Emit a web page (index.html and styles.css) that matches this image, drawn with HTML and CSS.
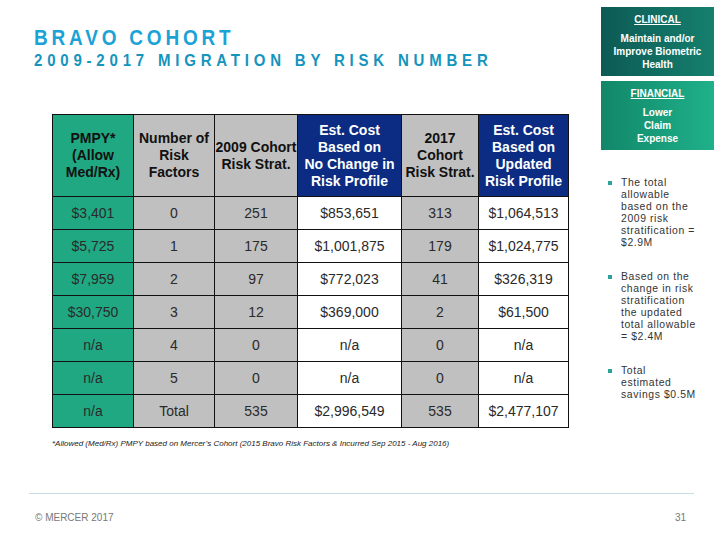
FILE: index.html
```html
<!DOCTYPE html>
<html lang="en">
<head>
<meta charset="utf-8">
<title>Bravo Cohort</title>
<link rel="stylesheet" href="styles.css">
</head>
<body>
<div class="page">
  <div class="main">
    <h1 class="title">BRAVO COHORT</h1>
    <h2 class="subtitle">2009-2017 MIGRATION BY RISK NUMBER</h2>
    <table class="grid">
      <colgroup>
        <col class="c1"><col class="c2"><col class="c3"><col class="c4"><col class="c5"><col class="c6">
      </colgroup>
      <thead>
        <tr>
          <th class="green">PMPY*<br>(Allow<br>Med/Rx)</th>
          <th class="grey">Number of<br>Risk<br>Factors</th>
          <th class="grey nowrap">2009 Cohort<br>Risk Strat.</th>
          <th class="navy">Est. Cost<br>Based on<br>No Change in<br>Risk Profile</th>
          <th class="grey">2017<br>Cohort<br>Risk Strat.</th>
          <th class="navy">Est. Cost<br>Based on<br>Updated<br>Risk Profile</th>
        </tr>
      </thead>
      <tbody>
        <tr><td class="green">$3,401</td><td class="grey">0</td><td class="grey">251</td><td>$853,651</td><td class="grey">313</td><td>$1,064,513</td></tr>
        <tr><td class="green">$5,725</td><td class="grey">1</td><td class="grey">175</td><td>$1,001,875</td><td class="grey">179</td><td>$1,024,775</td></tr>
        <tr><td class="green">$7,959</td><td class="grey">2</td><td class="grey">97</td><td>$772,023</td><td class="grey">41</td><td>$326,319</td></tr>
        <tr><td class="green">$30,750</td><td class="grey">3</td><td class="grey">12</td><td>$369,000</td><td class="grey">2</td><td>$61,500</td></tr>
        <tr><td class="green">n/a</td><td class="grey">4</td><td class="grey">0</td><td>n/a</td><td class="grey">0</td><td>n/a</td></tr>
        <tr><td class="green">n/a</td><td class="grey">5</td><td class="grey">0</td><td>n/a</td><td class="grey">0</td><td>n/a</td></tr>
        <tr><td class="green">n/a</td><td class="grey">Total</td><td class="grey">535</td><td>$2,996,549</td><td class="grey">535</td><td>$2,477,107</td></tr>
      </tbody>
    </table>
    <p class="footnote">*Allowed (Med/Rx) PMPY based on Mercer’s Cohort (2015 Bravo Risk Factors &amp; Incurred Sep 2015 - Aug 2016)</p>
  </div>
  <aside class="side">
    <div class="box box-clinical">
      <div class="box-head">CLINICAL</div>
      <div class="box-text">Maintain and/or<br>Improve Biometric<br>Health</div>
    </div>
    <div class="box box-financial">
      <div class="box-head">FINANCIAL</div>
      <div class="box-text">Lower<br>Claim<br>Expense</div>
    </div>
    <ul class="points">
      <li><span class="dot"></span><span>The total<br>allowable<br>based on the<br>2009 risk<br>stratification =<br>$2.9M</span></li>
      <li><span class="dot"></span><span>Based on the<br>change in risk<br>stratification<br>the updated<br>total allowable<br>= $2.4M</span></li>
      <li><span class="dot"></span><span>Total<br>estimated<br>savings $0.5M</span></li>
    </ul>
  </aside>
</div>
<footer class="footer">
  <span class="copy">© MERCER 2017</span>
  <span class="num">31</span>
</footer>
</body>
</html>
```
FILE: styles.css
```css
html, body {
  margin: 0;
  padding: 0;
  background: #ffffff;
}
body {
  width: 720px;
  height: 540px;
  overflow: hidden;
  font-family: "Liberation Sans", Arial, sans-serif;
  color: #222;
}
.page {
  display: flex;
  height: 493px;
}
.main {
  padding-left: 34px;
  padding-top: 27px;
  width: 567px;
  box-sizing: border-box;
}
.title {
  margin: 0;
  font-size: 19px;
  line-height: 22px;
  font-weight: bold;
  letter-spacing: 3.8px;
  color: #1ba2d6;
  transform: scaleY(1.12);
  transform-origin: left center;
}
.subtitle {
  margin: 2px 0 0 0;
  font-size: 15px;
  line-height: 18px;
  font-weight: bold;
  letter-spacing: 4.8px;
  color: #1594bd;
  transform: scaleY(1.15);
  transform-origin: left center;
}
.grid {
  margin: 45px 0 0 18px;
  border-collapse: collapse;
  table-layout: fixed;
  width: 516px;
}
.c1 { width: 81px; }
.c2 { width: 81px; }
.c3 { width: 83px; }
.c4 { width: 104px; }
.c5 { width: 77px; }
.c6 { width: 90px; }
.grid th, .grid td {
  border: 1px solid #111;
  text-align: center;
  padding: 0;
}
.grid th {
  height: 81px;
  font-size: 14px;
  line-height: 17px;
  font-weight: bold;
  color: #111;
}
.grid td {
  height: 32px;
  font-size: 14px;
  color: #2a2a2a;
}
.grid .nowrap { white-space: nowrap; }
.green { background: #1fa882; }
.grey { background: #c0c0c0; }
.navy { background: #0b2c82; }
.grid th.navy { color: #ffffff; }
.footnote {
  margin: 11px 0 0 18px;
  font-size: 8px;
  font-style: italic;
  color: #222;
  white-space: nowrap;
}
.side {
  width: 113px;
  margin-left: 34px;
  padding-top: 7px;
}
.box {
  height: 69px;
  box-sizing: border-box;
  padding-top: 6px;
  color: #ffffff;
  text-align: center;
  font-weight: bold;
  font-size: 10px;
}
.box-clinical {
  background: linear-gradient(90deg, #0d5a55, #15806e);
}
.box-financial {
  margin-top: 5px;
  background: linear-gradient(90deg, #118768, #1fb18a);
}
.box-head {
  line-height: 13px;
  text-decoration: underline;
  margin-bottom: 6px;
}
.box-text {
  line-height: 13px;
}
.points {
  list-style: none;
  margin: 27px 0 0 0;
  padding: 0 0 0 7px;
  font-size: 10.4px;
  letter-spacing: 0.6px;
  line-height: 12px;
  color: #333;
}
.points li {
  display: flex;
  gap: 9px;
  margin-bottom: 22px;
}
.dot {
  flex: none;
  width: 4px;
  height: 4px;
  margin-top: 4px;
  background: #2ba39a;
}
.footer {
  margin: 0 26px 0 29px;
  border-top: 1px solid #c6dde3;
  display: flex;
  justify-content: space-between;
  padding: 18px 8px 0 6px;
  font-size: 10px;
  color: #777;
}
```
